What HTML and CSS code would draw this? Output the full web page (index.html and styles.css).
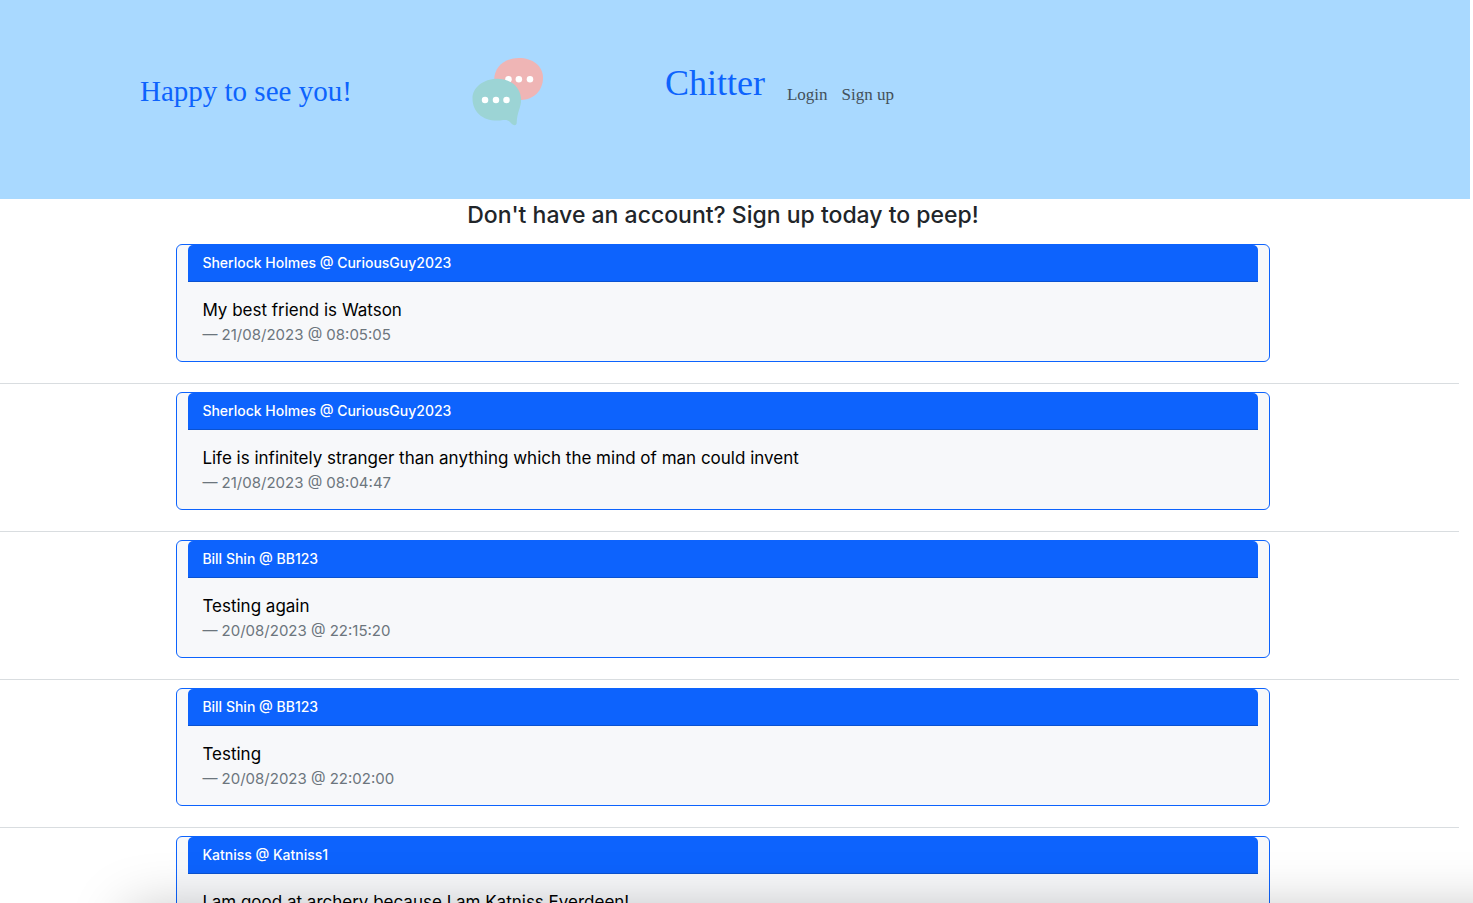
FILE: index.html
```html
<!DOCTYPE html>
<html lang="en">
<head>
<meta charset="utf-8">
<title>Chitter</title>
<link rel="stylesheet" href="styles.css">
</head>
<body>
<header class="banner">
  <p class="greeting">Happy to see you!</p>
  <svg class="logo" viewBox="0 0 72 70" aria-hidden="true">
    <path fill="#efb5b5" d="M22 22C22 9 33 0 47 0C61 0 71.500 8 71.500 20C71.500 33 62 42.500 49 42.500C34 42 22 34 22 22Z"/>
    <g fill="#fff"><circle cx="36.500" cy="21.500" r="3.300"/><circle cx="47" cy="21.500" r="3.300"/><circle cx="58.300" cy="21.500" r="3.300"/></g>
    <path fill="#9cd4d5" d="M25 21C39 21 49 30 49.300 42C49.400 50 45 55 44.800 66C44.600 69 41.500 68.500 39.500 66.500C37 63.500 35 62.500 31 63C13 66 0 56 0 41C0 30 11 21 25 21Z"/>
    <g fill="#fff"><circle cx="12.700" cy="42.500" r="3.300"/><circle cx="23.800" cy="42.500" r="3.300"/><circle cx="34.500" cy="42.500" r="3.300"/></g>
  </svg>
  <nav class="nav">
    <a class="brand" href="#">Chitter</a>
    <a class="nav-link" href="#">Login</a>
    <a class="nav-link" href="#">Sign up</a>
  </nav>
</header>
<main class="feed">
  <h1 class="title">Don't have an account? Sign up today to peep!</h1>
  <article class="peep">
    <h2 class="author">Sherlock Holmes @ CuriousGuy2023</h2>
    <p class="message">My best friend is Watson</p>
    <p class="date">— 21/08/2023 @ 08:05:05</p>
  </article>
  <hr class="rule">
  <article class="peep">
    <h2 class="author">Sherlock Holmes @ CuriousGuy2023</h2>
    <p class="message">Life is infinitely stranger than anything which the mind of man could invent</p>
    <p class="date">— 21/08/2023 @ 08:04:47</p>
  </article>
  <hr class="rule">
  <article class="peep">
    <h2 class="author">Bill Shin @ BB123</h2>
    <p class="message">Testing again</p>
    <p class="date">— 20/08/2023 @ 22:15:20</p>
  </article>
  <hr class="rule">
  <article class="peep">
    <h2 class="author">Bill Shin @ BB123</h2>
    <p class="message">Testing</p>
    <p class="date">— 20/08/2023 @ 22:02:00</p>
  </article>
  <hr class="rule">
  <article class="peep">
    <h2 class="author">Katniss @ Katniss1</h2>
    <p class="message">I am good at archery because I am Katniss Everdeen!</p>
  </article>
</main>
<div class="edge-shadow"></div>
</body>
</html>
```
FILE: styles.css
```css
* {
  box-sizing: border-box;
}
body {
  margin: 0;
  height: 100vh;
  overflow: hidden;
  background: #fff;
  color: #212529;
  font-family: Inter, "Liberation Sans", sans-serif;
}
h1, h2, p {
  margin: 0;
  font-weight: 400;
}
.banner {
  display: flex;
  align-items: flex-start;
  margin-right: 3px;
  padding: 58px 140px 72px;
  background: #a9d9ff;
  font-family: "Liberation Serif", serif;
}
.greeting {
  flex: 0 0 332px;
  padding-top: 15px;
  color: #0d63fd;
  font-size: 29px;
  line-height: 36px;
}
.logo {
  width: 72px;
  height: 69px;
  margin-right: 121px;
}
.nav {
  display: flex;
  align-items: flex-start;
}
.nav a {
  text-decoration: none;
}
.brand {
  margin-right: 15px;
  color: #0d63fd;
  font-size: 36px;
  line-height: 50px;
}
.nav-link {
  padding: 24px 7px 0;
  color: #43505a;
  font-size: 17px;
  line-height: 26px;
}
.feed {
  margin-right: 14px;
}
.title {
  margin-right: 13px;
  padding-bottom: 13px;
  font-size: 23px;
  font-weight: 500;
  line-height: 32px;
  text-align: center;
}
.peep {
  margin: 0 calc(12.5% + 7px) 0 calc(12.5% - 6px);
  padding: 0 11px 14px;
  border: 1px solid #0d63fd;
  border-radius: 6px;
  background: #f7f8fa;
}
.author {
  padding: 8px 14px;
  border-bottom: 1px solid #0b52d0;
  border-radius: 5px 5px 0 0;
  background: #0d63fd;
  color: #fff;
  font-size: 14px;
  font-weight: 500;
  line-height: 20px;
}
.message {
  padding: 15px 14px 0;
  color: #000;
  font-size: 17px;
  line-height: 26px;
}
.date {
  padding: 0 14px;
  color: #6c757d;
  font-size: 15px;
  line-height: 24px;
}
.rule {
  height: 1px;
  margin: 21px 0 8px;
  border: 0;
  background: #d9dde0;
}
.edge-shadow {
  position: fixed;
  top: 100%;
  left: 128px;
  right: -100px;
  height: 100px;
  box-shadow: 0 8px 56px rgba(0, 0, 0, 0.25);
}
```
